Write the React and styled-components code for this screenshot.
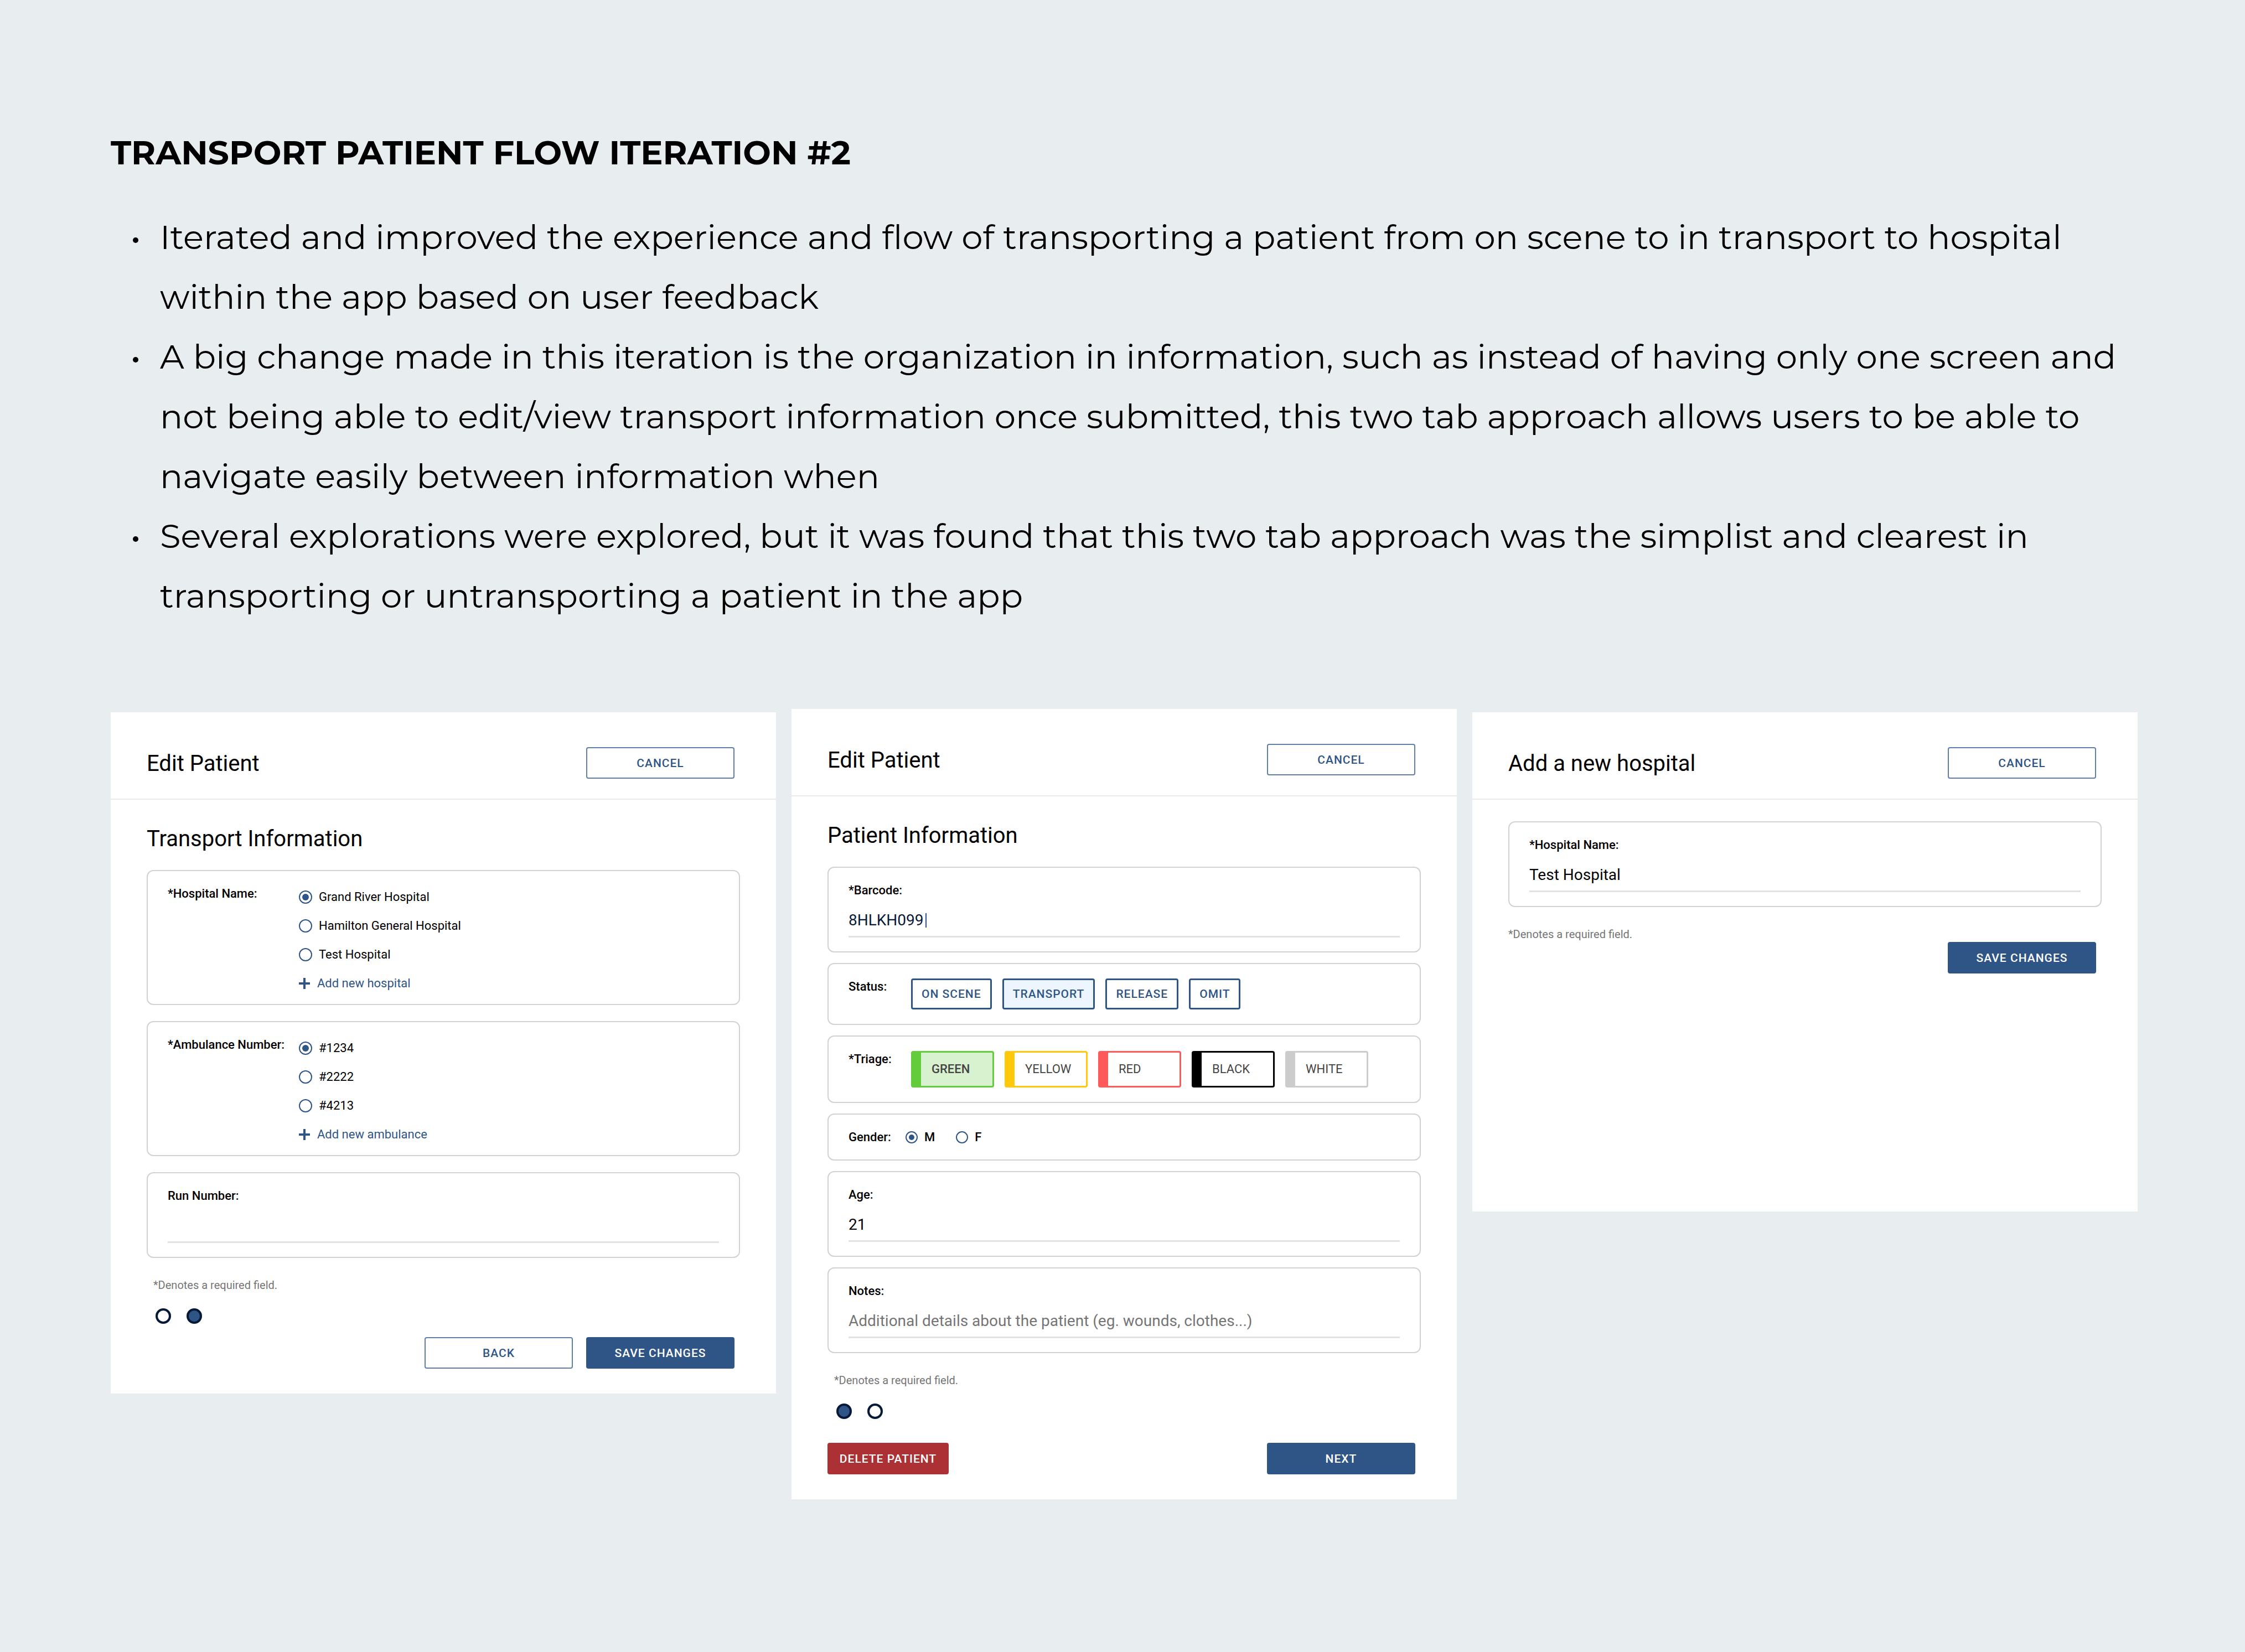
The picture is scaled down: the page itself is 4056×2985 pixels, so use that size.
import React, { useState } from "react";
import styled, { createGlobalStyle, css } from "styled-components";

const color = {
  page: "#e8eef0",
  ink: "#000000",
  blue: "#2f5586",
  outline: "#5f7fa8",
  navy: "#061a38",
  red: "#ab3134",
  tint: "#edf6ff",
  muted: "#757575",
  line: "#d2d2d2",
  rule: "#e2e2e2",
};

const GlobalStyle = createGlobalStyle`
  *, *::before, *::after { box-sizing: border-box; }
  body {
    margin: 0;
    background: ${color.page};
    color: ${color.ink};
    font-family: Roboto, "Liberation Sans", sans-serif;
  }
  button, input { font-family: inherit; }
`;

const Page = styled.main`
  min-height: 100vh;
  padding: 222px 194px 200px 200px;
  background: ${color.page};
`;

const Intro = styled.section`
  font-family: Montserrat, Inter, sans-serif;
  margin-bottom: 151px;
`;

const Heading = styled.h1`
  margin: 0 0 44px;
  font-size: 60px;
  line-height: 108px;
  font-weight: 700;
`;

const Points = styled.ul`
  margin: 0;
  padding: 0;
  list-style: none;
  font-size: 61px;
  line-height: 108px;
`;

const Point = styled.li`
  display: grid;
  grid-template-columns: 49px 1fr;
  padding-left: 40px;

  &::before {
    content: "";
    width: 10px;
    height: 10px;
    margin-top: 55px;
    border-radius: 50%;
    background: ${color.ink};
  }
`;

const Line = styled.span`
  display: block;
`;

const Cards = styled.div`
  display: grid;
  grid-template-columns: repeat(3, minmax(0, 1fr));
  gap: 28px;
  align-items: start;

  @media (max-width: 2400px) {
    grid-template-columns: minmax(0, 1fr);
  }
`;

const Card = styled.section`
  margin-top: ${(p) => (p.$raised ? 0 : 6)}px;
  min-height: 902px;
  padding-bottom: 45px;
  background: #ffffff;
`;

const CardHeader = styled.header`
  display: flex;
  align-items: center;
  justify-content: space-between;
  padding: 63px 75px 36px 65px;
  border-bottom: 2px solid #e9e9e9;
`;

const CardTitle = styled.h2`
  margin: 0;
  padding-top: 2px;
  font-size: 40px;
  line-height: 48px;
  font-weight: 400;
`;

const SectionTitle = styled.h3`
  margin: 8px 0 32px;
  font-size: 40px;
  line-height: 48px;
  font-weight: 400;
`;

const CardBody = styled.form`
  padding: 39px 65px 0;
`;

const Fields = styled.div`
  display: grid;
  gap: ${(p) => p.$gap || 19}px;
`;

const fieldBox = css`
  min-width: 0;
  margin: 0;
  border: 2px solid ${color.line};
  border-radius: 12px;
  background: #ffffff;
`;

const TextBox = styled.div`
  ${fieldBox}
  padding: 21px 36px 25px;
`;

const OptionBox = styled.div`
  ${fieldBox}
  display: grid;
  grid-template-columns: 237px 1fr;
  padding: 21px 36px 11px;
`;

const ChipBox = styled.div`
  ${fieldBox}
  display: grid;
  grid-template-columns: 113px 1fr;
  padding: 21px 36px 26px;
`;

const InlineBox = styled.div`
  ${fieldBox}
  display: grid;
  grid-template-columns: 103px 1fr;
  padding: 21px 36px 28px;
`;

const labelText = css`
  display: block;
  padding-top: 8px;
  font-size: 22px;
  line-height: 24px;
  font-weight: 500;
  white-space: nowrap;
`;

const Label = styled.label`
  ${labelText}
`;

const GroupLabel = styled.span`
  ${labelText}
`;

const InputRow = styled.div`
  display: flex;
  align-items: center;
  margin-top: 22px;
  padding-bottom: 8px;
  border-bottom: 3px solid ${color.rule};
`;

const TextInput = styled.input`
  flex: ${(p) => (p.$editing ? "0 1 auto" : "1 1 auto")};
  field-sizing: ${(p) => (p.$editing ? "content" : "fixed")};
  min-width: 0;
  height: 40px;
  padding: 0;
  border: 0;
  outline: 0;
  background: transparent;
  color: ${(p) => (p.$editing ? color.navy : color.ink)};
  font-size: 28px;
  line-height: 40px;

  &::placeholder {
    color: ${color.muted};
    opacity: 1;
  }
`;

const Caret = styled.span`
  width: 2px;
  height: 26px;
  margin-left: 3px;
  background: ${color.blue};
`;

const Options = styled.div`
  display: grid;
  grid-auto-rows: 52px;
`;

const Option = styled.label`
  display: flex;
  align-items: center;
  gap: 12px;
  font-size: 22px;
  line-height: 24px;
  font-weight: ${(p) => (p.$strong ? 500 : 400)};
`;

const Radio = styled.input.attrs({ type: "radio" })`
  appearance: none;
  flex: none;
  width: ${(p) => p.$size || 24}px;
  height: ${(p) => p.$size || 24}px;
  margin: 0;
  padding: 4px;
  border: 2px solid ${color.blue};
  border-radius: 50%;
  background: #ffffff;

  &:checked {
    background: ${color.blue} content-box;
  }
`;

const InlineOptions = styled.div`
  display: flex;
  gap: 38px;
  padding-top: 8px;
`;

const AddLink = styled.a`
  display: flex;
  align-items: center;
  gap: 13px;
  color: ${color.blue};
  font-size: 22px;
  line-height: 24px;
  text-decoration: none;
`;

const Chips = styled.div`
  display: flex;
  flex-wrap: wrap;
  gap: 19px;
  padding-top: 5px;
`;

const buttonText = css`
  font-size: 21px;
  line-height: 24px;
  font-weight: 500;
  letter-spacing: 1px;
  white-space: nowrap;
  cursor: pointer;
`;

const Chip = styled.button`
  ${buttonText}
  height: 56px;
  padding: 0 16px;
  border: 3px solid ${color.blue};
  border-radius: 4px;
  background: ${(p) => (p.$active ? color.tint : "#ffffff")};
  color: ${color.blue};
`;

const TriageChip = styled.button`
  width: 150px;
  height: 66px;
  padding: 0 0 0 19px;
  border: 3px solid ${(p) => p.$hue};
  border-left-width: 18px;
  border-radius: 4px;
  background: ${(p) => (p.$active ? "#d8f2cf" : "#ffffff")};
  color: #444444;
  font-size: 22px;
  line-height: 24px;
  font-weight: ${(p) => (p.$active ? 500 : 400)};
  text-align: left;
  cursor: pointer;
`;

const buttonKinds = {
  outline: { fill: "#ffffff", edge: color.outline, text: color.blue },
  primary: { fill: color.blue, edge: color.blue, text: "#ffffff" },
  danger: { fill: color.red, edge: color.red, text: "#ffffff" },
};

const Button = styled.button`
  ${buttonText}
  width: ${(p) => (p.$kind === "danger" ? 219 : 268)}px;
  height: 57px;
  padding: 0;
  border: 2px solid ${(p) => buttonKinds[p.$kind].edge};
  border-radius: 4px;
  background: ${(p) => buttonKinds[p.$kind].fill};
  color: ${(p) => buttonKinds[p.$kind].text};
`;

const Note = styled.p`
  margin: 37px 0 0;
  padding-left: ${(p) => (p.$indent ? 12 : 0)}px;
  color: ${color.muted};
  font-size: 20px;
  line-height: 24px;
`;

const Pager = styled.div`
  display: flex;
  gap: 28px;
  padding: 30px 0 0 16px;
`;

const PageDot = styled.button`
  width: 28px;
  height: 28px;
  padding: 0;
  border: 4px solid ${color.navy};
  border-radius: 50%;
  background: ${(p) => (p.$active ? color.blue : "#ffffff")};
`;

const Actions = styled.div`
  display: flex;
  justify-content: ${(p) => (p.$spread ? "space-between" : "flex-end")};
  gap: 24px;
  padding-right: 10px;
  margin-top: ${(p) => p.$top || 0}px;
`;

const PlusIcon = () => (
  <svg width="20" height="20" viewBox="0 0 20 20" aria-hidden="true">
    <path d="M10 0v20M0 10h20" stroke={color.blue} strokeWidth="4" />
  </svg>
);

const points = [
  [
    "Iterated and improved the experience and flow of transporting a patient from on scene to in transport to hospital",
    "within the app based on user feedback",
  ],
  [
    "A big change made in this iteration is the organization in information, such as instead of having only one screen and",
    "not being able to edit/view transport information once submitted, this two tab approach allows users to be able to",
    "navigate easily between information when",
  ],
  [
    "Several explorations were explored, but it was found that this two tab approach was the simplist and clearest in",
    "transporting or untransporting a patient in the app",
  ],
];

const triageLevels = [
  ["GREEN", "#62cc3a"],
  ["YELLOW", "#ffc80a"],
  ["RED", "#ff5a5a"],
  ["BLACK", "#000000"],
  ["WHITE", "#cccccc"],
];

function TextField({ id, label, value = "", placeholder, editing }) {
  const [text, setText] = useState(value);
  return (
    <TextBox>
      <Label htmlFor={id}>{label}</Label>
      <InputRow>
        <TextInput
          id={id}
          type="text"
          value={text}
          placeholder={placeholder}
          $editing={editing}
          onChange={(e) => setText(e.target.value)}
        />
        {editing && <Caret />}
      </InputRow>
    </TextBox>
  );
}

function RadioField({ name, label, options, addLabel }) {
  return (
    <OptionBox role="radiogroup" aria-labelledby={`${name}-label`}>
      <GroupLabel id={`${name}-label`}>{label}</GroupLabel>
      <Options>
        {options.map((option, i) => (
          <Option key={option}>
            <Radio name={name} defaultChecked={i === 0} />
            {option}
          </Option>
        ))}
        <AddLink href="#add">
          <PlusIcon />
          {addLabel}
        </AddLink>
      </Options>
    </OptionBox>
  );
}

function Header({ title }) {
  return (
    <CardHeader>
      <CardTitle>{title}</CardTitle>
      <Button type="button" $kind="outline">CANCEL</Button>
    </CardHeader>
  );
}

function Steps({ current }) {
  return (
    <Pager>
      {[1, 2].map((step) => (
        <PageDot
          key={step}
          type="button"
          aria-label={`Step ${step}`}
          $active={step === current}
        />
      ))}
    </Pager>
  );
}

function TransportCard() {
  return (
    <Card>
      <Header title="Edit Patient" />
      <CardBody>
        <SectionTitle>Transport Information</SectionTitle>
        <Fields $gap={29}>
          <RadioField
            name="hospital"
            label="*Hospital Name:"
            options={["Grand River Hospital", "Hamilton General Hospital", "Test Hospital"]}
            addLabel="Add new hospital"
          />
          <RadioField
            name="ambulance"
            label="*Ambulance Number:"
            options={["#1234", "#2222", "#4213"]}
            addLabel="Add new ambulance"
          />
          <TextField id="run-number" label="Run Number:" />
        </Fields>
        <Note $indent>*Denotes a required field.</Note>
        <Steps current={2} />
        <Actions $top={24}>
          <Button type="button" $kind="outline">BACK</Button>
          <Button type="button" $kind="primary">SAVE CHANGES</Button>
        </Actions>
      </CardBody>
    </Card>
  );
}

function PatientCard() {
  const [status, setStatus] = useState("TRANSPORT");
  const [triage, setTriage] = useState("GREEN");
  return (
    <Card $raised>
      <Header title="Edit Patient" />
      <CardBody>
        <SectionTitle>Patient Information</SectionTitle>
        <Fields>
          <TextField id="barcode" label="*Barcode:" value="8HLKH099" editing />
          <ChipBox>
            <GroupLabel>Status:</GroupLabel>
            <Chips>
              {["ON SCENE", "TRANSPORT", "RELEASE", "OMIT"].map((name) => (
                <Chip
                  key={name}
                  type="button"
                  $active={name === status}
                  onClick={() => setStatus(name)}
                >
                  {name}
                </Chip>
              ))}
            </Chips>
          </ChipBox>
          <ChipBox>
            <GroupLabel>*Triage:</GroupLabel>
            <Chips>
              {triageLevels.map(([name, hue]) => (
                <TriageChip
                  key={name}
                  type="button"
                  $hue={hue}
                  $active={name === triage}
                  onClick={() => setTriage(name)}
                >
                  {name}
                </TriageChip>
              ))}
            </Chips>
          </ChipBox>
          <InlineBox role="radiogroup" aria-labelledby="gender-label">
            <GroupLabel id="gender-label">Gender:</GroupLabel>
            <InlineOptions>
              <Option $strong>
                <Radio name="gender" $size={22} defaultChecked />M
              </Option>
              <Option $strong>
                <Radio name="gender" $size={22} />F
              </Option>
            </InlineOptions>
          </InlineBox>
          <TextField id="age" label="Age:" value="21" />
          <TextField
            id="notes"
            label="Notes:"
            placeholder="Additional details about the patient (eg. wounds, clothes...)"
          />
        </Fields>
        <Note $indent>*Denotes a required field.</Note>
        <Steps current={1} />
        <Actions $spread $top={43}>
          <Button type="button" $kind="danger">DELETE PATIENT</Button>
          <Button type="button" $kind="primary">NEXT</Button>
        </Actions>
      </CardBody>
    </Card>
  );
}

function HospitalCard() {
  return (
    <Card>
      <Header title="Add a new hospital" />
      <CardBody>
        <Fields>
          <TextField id="hospital-name" label="*Hospital Name:" value="Test Hospital" />
        </Fields>
        <Note>*Denotes a required field.</Note>
        <Actions $top={2}>
          <Button type="button" $kind="primary">SAVE CHANGES</Button>
        </Actions>
      </CardBody>
    </Card>
  );
}

export default function App() {
  return (
    <>
      <GlobalStyle />
      <Page>
        <Intro>
          <Heading>TRANSPORT PATIENT FLOW ITERATION #2</Heading>
          <Points>
            {points.map((lines) => (
              <Point key={lines[0]}>
                <div>
                  {lines.map((line) => (
                    <Line key={line}>{line}</Line>
                  ))}
                </div>
              </Point>
            ))}
          </Points>
        </Intro>
        <Cards>
          <TransportCard />
          <PatientCard />
          <HospitalCard />
        </Cards>
      </Page>
    </>
  );
}
